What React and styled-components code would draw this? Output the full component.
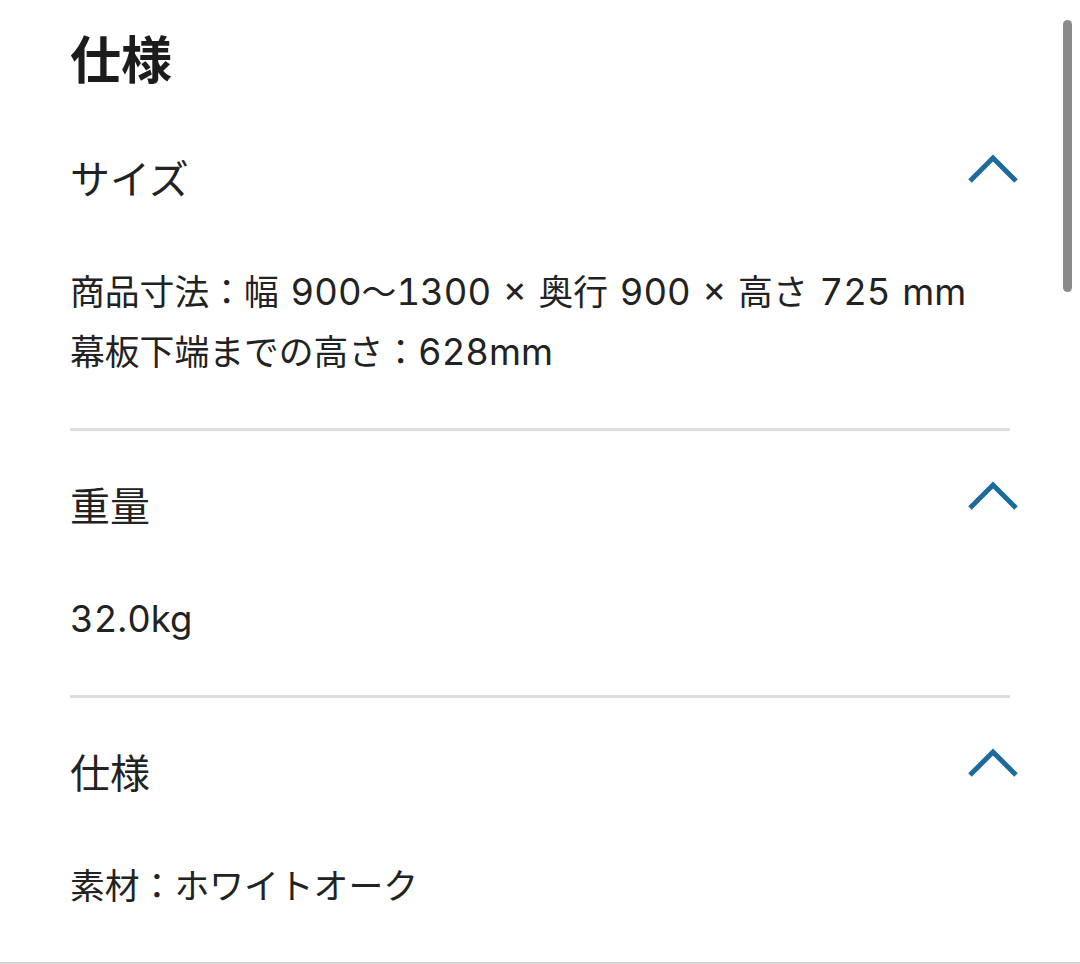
import React from "react";
import styled, { createGlobalStyle } from "styled-components";

const GlobalStyle = createGlobalStyle`
  html, body {
    margin: 0;
    padding: 0;
    background: #ffffff;
  }
  body {
    font-family: Inter, "Noto Sans CJK JP", sans-serif;
    color: #222222;
    overflow: hidden;
  }
`;

const Page = styled.div`
  width: 1080px;
  height: 964px;
  overflow: hidden;
  position: relative;
`;

const Content = styled.div`
  padding: 0 70px;
`;

const Title = styled.h1`
  margin: 22px 0 12px;
  font-family: "Noto Sans CJK JP", sans-serif;
  font-size: 51px;
  line-height: 70px;
  font-weight: 700;
  color: #1c1c1c;
`;

const Section = styled.section`
  padding: 46px 0 46px;
  border-bottom: ${(p) => (p.$last ? "none" : "3px solid #dddddd")};
`;

const Header = styled.div`
  display: flex;
  align-items: center;
  justify-content: space-between;
  margin-right: -9px;
`;

const Heading = styled.h2`
  margin: 0;
  font-size: 40px;
  line-height: 60px;
  font-weight: 400;
  color: #222222;
`;

const Chevron = styled.svg`
  width: 52px;
  height: 32px;
  margin-top: -22px;
  flex-shrink: 0;
`;

const Body = styled.div`
  margin-top: 52px;
  font-size: 34.8px;
  line-height: 60px;
  color: #222222;
  white-space: nowrap;
`;

const Line = styled.div``;

const Latin = styled.span`
  font-size: 36.5px;
  font-variant-numeric: tabular-nums;
  word-spacing: 2px;
`;

const BottomRule = styled.div`
  height: 3px;
  background: #d4d4d4;
`;

const ScrollThumb = styled.div`
  position: absolute;
  top: 20px;
  right: 8px;
  width: 9px;
  height: 272px;
  border-radius: 5px;
  background: #8a8a8a;
`;

const ChevronUp = () => (
  <Chevron viewBox="0 0 52 32">
    <polyline
      points="3,28 26,5 49,28"
      fill="none"
      stroke="#1d6a9c"
      strokeWidth="5"
      strokeLinecap="butt"
    />
  </Chevron>
);

// wrap latin runs so they can be sized like the reference's latin face
const withLatin = (text) =>
  text.split(/([\x20-\x7E×]+)/).map((part, i) =>
    /^[\x20-\x7E×]+$/.test(part) ? <Latin key={i}>{part}</Latin> : part
  );

const specs = [
  {
    title: "サイズ",
    lines: [
      "商品寸法：幅 900〜1300 × 奥行 900 × 高さ 725 mm",
      "幕板下端までの高さ：628mm",
    ],
  },
  { title: "重量", lines: ["32.0kg"] },
  { title: "仕様", lines: ["素材：ホワイトオーク"] },
];

export default function App() {
  return (
    <Page>
      <GlobalStyle />
      <Content>
        <Title>仕様</Title>
        {specs.map((s, i) => (
          <Section key={s.title} $last={i === specs.length - 1}>
            <Header>
              <Heading>{s.title}</Heading>
              <ChevronUp />
            </Header>
            <Body>
              {s.lines.map((l) => (
                <Line key={l}>{withLatin(l)}</Line>
              ))}
            </Body>
          </Section>
        ))}
      </Content>
      <BottomRule />
      <ScrollThumb />
    </Page>
  );
}
